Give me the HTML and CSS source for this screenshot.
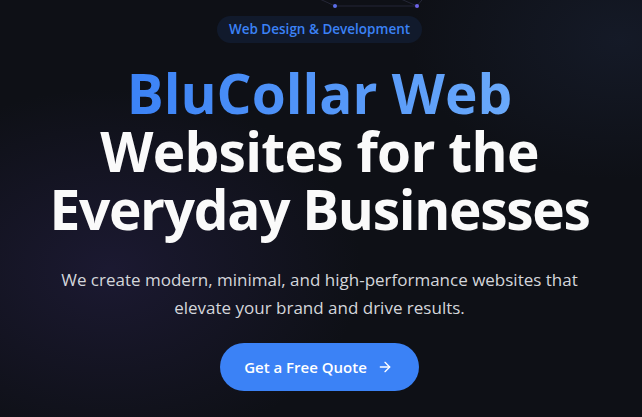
FILE: index.html
```html
<!DOCTYPE html>
<html lang="en">
<head>
<meta charset="utf-8">
<title>BluCollar Web</title>
<link rel="stylesheet" href="styles.css">
</head>
<body>
<section class="hero">
  <svg class="network" width="642" height="20" viewBox="0 0 642 20" aria-hidden="true">
    <line x1="335" y1="6" x2="300" y2="-10" class="link"/>
    <line x1="335" y1="6" x2="417" y2="6" class="link faint"/>
    <line x1="417" y1="6" x2="380" y2="-10" class="link"/>
    <line x1="417" y1="6" x2="430" y2="-10" class="link"/>
    <circle cx="335" cy="6" r="2" class="dot"/>
    <circle cx="417" cy="6" r="2" class="dot violet"/>
  </svg>
  <div class="content">
    <span class="badge">Web Design &amp; Development</span>
    <h1 class="title">
      <span class="brand">BluCollar Web</span>
      <span class="line line-mid">Websites for the</span>
      <span class="line line-last">Everyday Businesses</span>
    </h1>
    <p class="lead">We create modern, minimal, and high-performance websites that elevate your brand and drive results.</p>
    <a class="cta" href="#">Get a Free Quote
      <svg class="arrow" width="16" height="16" viewBox="0 0 24 24" fill="none" stroke="currentColor" stroke-width="2" stroke-linecap="round" stroke-linejoin="round"><path d="M5 12h14"/><path d="M12 5l7 7-7 7"/></svg>
    </a>
  </div>
</section>
</body>
</html>
```

FILE: styles.css
```css
* { box-sizing: border-box; }
html, body { margin: 0; padding: 0; }
body {
  background: #0e1016;
  font-family: "Open Sans", "Noto Sans", sans-serif;
  color: #fff;
  overflow: hidden;
}
.hero {
  position: relative;
  width: 642px;
  height: 417px;
  background:
    radial-gradient(ellipse 360px 260px at 110px 270px, rgba(52, 42, 100, 0.35), rgba(52, 42, 100, 0) 70%),
    radial-gradient(ellipse 300px 200px at 620px 40px, rgba(40, 55, 90, 0.25), rgba(40, 55, 90, 0) 70%),
    #0e1016;
}
.network {
  position: absolute;
  left: 0;
  top: 0;
}
.link { stroke: rgba(140, 140, 200, 0.18); stroke-width: 1; }
.dot { fill: #5b6ee8; }
.dot.violet { fill: #6d63e6; }
.content {
  display: flex;
  flex-direction: column;
  align-items: center;
  padding-top: 16px;
  padding-right: 3px;
  text-align: center;
}
.badge {
  display: inline-block;
  height: 27px;
  line-height: 27px;
  padding: 0 12px;
  border-radius: 999px;
  background: #111a2c;
  color: #3b82f6;
  font-size: 13.5px;
  font-weight: 600;
}
.title {
  margin: 21px 0 0;
  font-size: 55px;
  line-height: 58px;
  font-weight: 700;
  letter-spacing: -1px;
  display: flex;
  flex-direction: column;
  align-items: center;
}
.brand {
  letter-spacing: 0;
  background: linear-gradient(90deg, #3b82f6 0%, #6aa9fa 100%);
  -webkit-background-clip: text;
  background-clip: text;
  color: transparent;
}
.line { color: #fafafa; }
.line-mid { letter-spacing: -0.7px; }
.line-last { letter-spacing: -1.3px; }
.lead {
  margin: 28px 0 0;
  width: 560px;
  font-size: 17px;
  line-height: 28px;
  color: #d4d6db;
}
.cta {
  margin-top: 21px;
  display: inline-flex;
  align-items: center;
  gap: 10px;
  height: 48px;
  padding: 0 26px 0 24px;
  border-radius: 999px;
  background: #3b82f6;
  color: #fff;
  text-decoration: none;
  font-size: 15px;
  font-weight: 600;
}
.arrow { display: block; }
```
